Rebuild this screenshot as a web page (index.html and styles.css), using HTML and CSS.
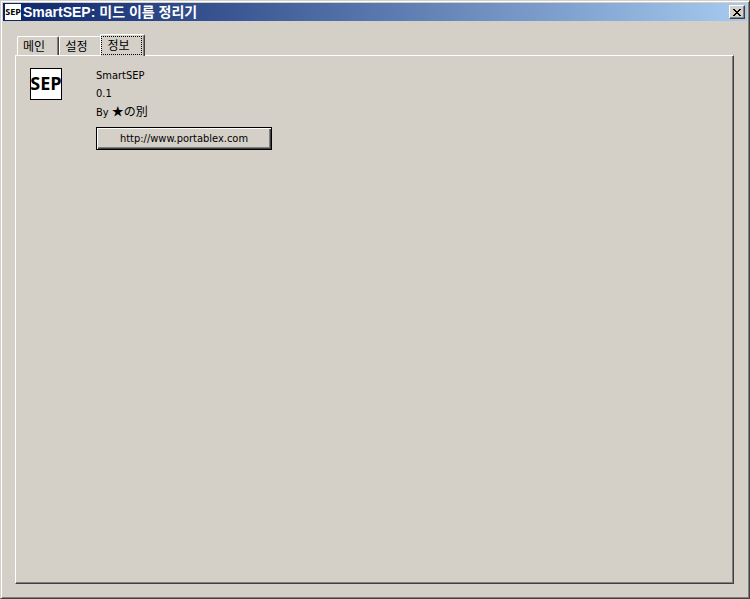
FILE: index.html
```html
<!DOCTYPE html>
<html lang="ko">
<head>
<meta charset="utf-8">
<title>SmartSEP: 미드 이름 정리기</title>
<link rel="stylesheet" href="styles.css">
</head>
<body>
<main class="window">
  <header class="titlebar">
    <svg class="title-icon" viewBox="0 0 16 16" aria-hidden="true">
      <rect width="16" height="16" fill="#fff"/>
      <text class="logo-text-small" x="8" y="11" text-anchor="middle">SEP</text>
    </svg>
    <h1 class="title">SmartSEP: 미드 이름 정리기</h1>
    <button class="close" type="button" aria-label="닫기">
      <svg viewBox="0 0 8 7" width="8" height="7" shape-rendering="crispEdges" aria-hidden="true">
        <path d="M0 0h2v1h1v1h2V1h1V0h2v1H7v1H6v1H5v1h1v1h1v1h1v1H6V6H5V5H3v1H2v1H0V6h1V5h1V4h1V3H2V2H1V1H0z"/>
      </svg>
    </button>
  </header>
  <div class="content">
    <div class="tabs" role="tablist">
      <button class="tab" type="button" role="tab" aria-selected="false">메인</button>
      <button class="tab" type="button" role="tab" aria-selected="false">설정</button>
      <button class="tab tab-active" type="button" role="tab" aria-selected="true" aria-controls="info" id="info-tab"><span class="focus">정보</span></button>
    </div>
    <section class="panel" id="info" role="tabpanel" aria-labelledby="info-tab">
      <svg class="logo" viewBox="0 0 32 32" aria-hidden="true">
        <rect x="0.5" y="0.5" width="31" height="31" fill="#fff" stroke="#000"/>
        <text class="logo-text" x="16" y="22" text-anchor="middle">SEP</text>
      </svg>
      <div class="about">
        <p>SmartSEP</p>
        <p>0.1</p>
        <p>By <span class="author">★の別</span></p>
        <button class="link-button" type="button">http://www.portablex.com</button>
      </div>
    </section>
  </div>
</main>
</body>
</html>
```

FILE: styles.css
```css
* {
  box-sizing: border-box;
}

body {
  margin: 0;
  background: #d4d0c8;
  color: #000;
  font: 11px/18px "DejaVu Sans Condensed", "Noto Sans CJK KR", sans-serif;
}

button {
  padding: 0;
  background: #d4d0c8;
  color: #000;
  font: inherit;
}

.window {
  display: flex;
  flex-direction: column;
  min-height: 100vh;
  padding: 1px;
  border: 1px solid;
  border-color: #d4d0c8 #404040 #404040 #d4d0c8;
  box-shadow: inset 1px 1px #fff, inset -1px -1px #808080;
}

.titlebar {
  display: flex;
  align-items: center;
  height: 18px;
  margin: 1px 1px 0;
  padding: 0 2px;
  background: linear-gradient(to right, #0a246a, #a6caf0);
}

.title-icon {
  flex: none;
  width: 16px;
  height: 16px;
}

.logo-text-small {
  font: bold 9px "Open Sans", sans-serif;
}

.title {
  flex: 1;
  margin: 0;
  padding-left: 2px;
  color: #fff;
  font: bold 14px/18px "Liberation Sans", "Noto Sans CJK KR", sans-serif;
  white-space: nowrap;
}

.close {
  display: flex;
  align-items: center;
  justify-content: center;
  width: 16px;
  height: 14px;
  border: 1px solid;
  border-color: #fff #404040 #404040 #fff;
  box-shadow: inset -1px -1px #808080;
}

.content {
  display: flex;
  flex: 1;
  flex-direction: column;
  padding: 13px 14px 13px 13px;
}

.tabs {
  display: flex;
  align-items: flex-end;
  padding-left: 2px;
}

.tab {
  width: 42px;
  height: 19px;
  padding-right: 8px;
  border: 1px solid;
  border-color: #fff #404040 transparent #fff;
  border-bottom: 0;
  border-radius: 2px 2px 0 0;
  box-shadow: inset -1px 0 #808080;
  font: 12px/18px "Noto Sans CJK KR", sans-serif;
}

.tab-active {
  z-index: 1;
  width: 45px;
  height: 22px;
  margin: 0 0 -1px -1px;
  padding: 1px 2px 1px 0;
}

.tab:not(.tab-active):has(+ .tab-active) {
  border-right: 0;
  box-shadow: none;
}

.focus {
  display: block;
  height: 19px;
  padding-right: 6px;
  border: 1px dotted #000;
  line-height: 15px;
}

.panel {
  display: flex;
  flex: 1;
  align-items: flex-start;
  gap: 34px;
  padding: 12px 14px;
  border: 1px solid;
  border-color: #fff #404040 #404040 #fff;
  box-shadow: inset -1px -1px #808080;
}

.logo {
  flex: none;
  width: 32px;
  height: 32px;
}

.logo-text {
  font: bold 18px "Open Sans", sans-serif;
}

.about {
  margin-top: -1px;
}

.about p {
  height: 18px;
  margin: 0;
}

.author {
  font-family: "Noto Sans CJK JP", sans-serif;
  font-size: 12px;
  line-height: 16px;
}

.link-button {
  display: block;
  width: 176px;
  height: 23px;
  margin-top: 6px;
  border: 1px solid #000;
  box-shadow: inset 1px 1px #fff, inset -1px -1px #404040, inset -2px -2px #808080;
}
```
